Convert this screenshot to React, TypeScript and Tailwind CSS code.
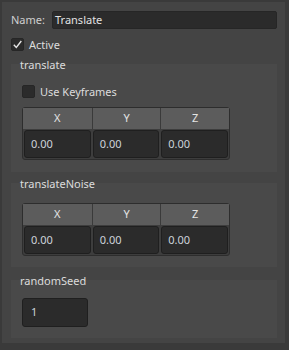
import React from "react";

const font = { fontFamily: '"Noto Sans", "Open Sans", sans-serif' };

function Check({ checked }: { checked?: boolean }) {
  return (
    <div className="flex h-[13px] w-[13px] items-center justify-center rounded-[2px] bg-[#2b2b2b] border border-[#262626]">
      {checked && (
        <svg width="11" height="11" viewBox="0 0 11 11">
          <path d="M1.8 5.8 L4.3 8.4 L9.3 2" fill="none" stroke="#e6e6e6" strokeWidth="1.4" />
        </svg>
      )}
    </div>
  );
}

function Vec3Table() {
  const cols = ["X", "Y", "Z"];
  return (
    <div className="w-[208px] rounded-[3px] border border-[#2d2d2d] bg-[#3d3d3d]">
      <div className="grid h-[21px] grid-cols-3 bg-[#5c5c5c]">
        {cols.map((c, i) => (
          <div
            key={c}
            className={`flex items-center justify-center text-[11px] text-[#e4e4e4] ${i > 0 ? "border-l border-[#3a3a3a]" : ""}`}
          >
            {c}
          </div>
        ))}
      </div>
      <div className="grid grid-cols-3 gap-[2px] p-[1px]">
        {cols.map((c) => (
          <div
            key={c}
            className="flex h-[28px] items-center rounded-[3px] border border-[#1f1f1f] bg-[#2b2b2b] pl-[6px] text-[11px] text-[#cdd3da]"
          >
            0.00
          </div>
        ))}
      </div>
    </div>
  );
}

function Section({ title, children, className }: { title: string; children: React.ReactNode; className?: string }) {
  return (
    <div className={`w-[266px] bg-[#494949] ${className ?? ""}`}>
      <div className="-mt-[6px] pl-[9px] text-[11px] leading-[14px] text-[#dcdcdc]">{title}</div>
      <div className="pl-[11px]">{children}</div>
    </div>
  );
}

export default function App() {
  return (
    <div className="h-[350px] w-[289px] bg-[#3a3a3a] pl-[2px] pt-[2px]" style={font}>
      <div className="flex h-[341px] w-[283px] flex-col bg-[#444444] pl-[9px]">
        <div className="mt-[9px] flex h-[18px] items-center">
          <span className="w-[41px] text-[11px] text-[#cfcfcf]">Name:</span>
          <div className="flex h-[18px] w-[225px] items-center rounded-[2px] border border-[#262626] bg-[#2b2b2b] pl-[2px] text-[11px] text-[#e2e2e2]">
            Translate
          </div>
        </div>
        <div className="mt-[9px] flex h-[13px] items-center gap-[5px]">
          <Check checked />
          <span className="text-[11px] leading-[13px] text-[#dcdcdc]">Active</span>
        </div>

        <Section title="translate" className="mt-[13px] h-[108px]">
          <div className="mt-[13px] flex h-[13px] items-center gap-[5px]">
            <Check />
            <span className="text-[11px] leading-[13px] text-[#dcdcdc]">Use Keyframes</span>
          </div>
          <div className="mt-[9px]">
            <Vec3Table />
          </div>
        </Section>

        <Section title="translateNoise" className="mt-[11px] h-[84px]">
          <div className="mt-[12px]">
            <Vec3Table />
          </div>
        </Section>

        <Section title="randomSeed" className="mt-[13px] h-[58px]">
          <div className="mt-[10px] flex h-[29px] w-[66px] items-center rounded-[3px] border border-[#1f1f1f] bg-[#2b2b2b] pl-[8px] text-[11px] text-[#cdd3da]">
            1
          </div>
        </Section>
      </div>
    </div>
  );
}
